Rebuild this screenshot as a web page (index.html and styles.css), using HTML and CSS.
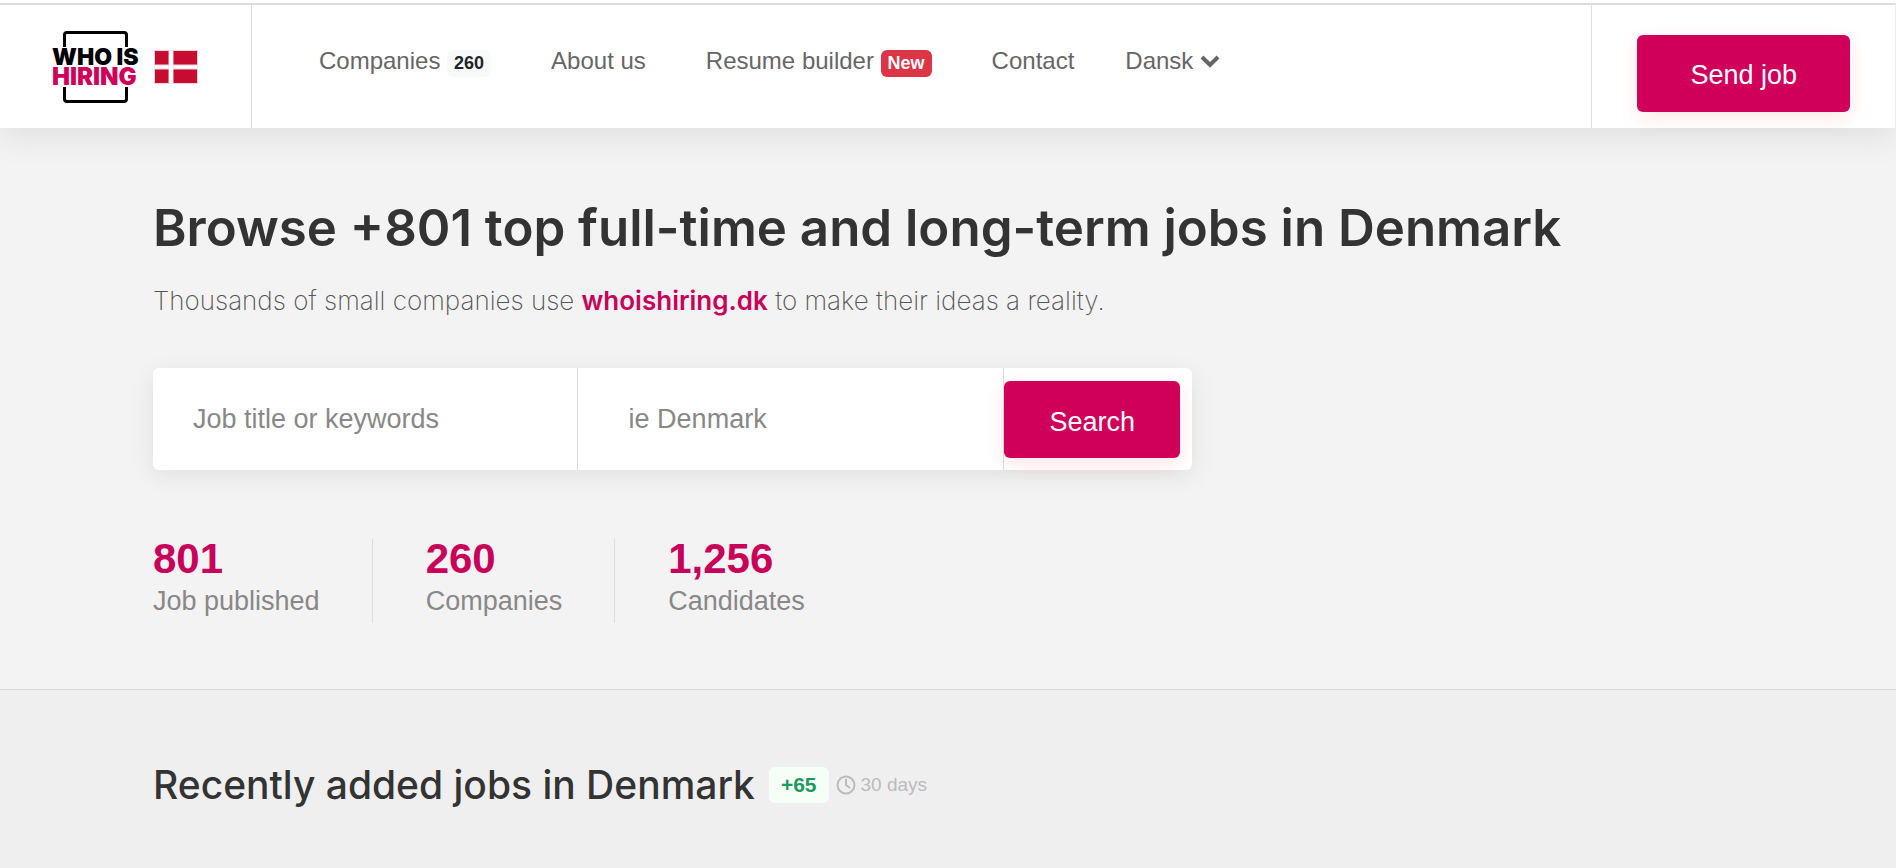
FILE: index.html
```
<!DOCTYPE html>
<html lang="en">
<head>
    <meta charset="UTF-8">
    <meta name="viewport" content="width=device-width, initial-scale=1.0">
    <title>Who is hiring</title>
    <link rel="stylesheet" href="styles.css">
</head>
<body>
    <header class="header">
        <a class="logo" href="#" aria-label="Who is hiring">
            <svg width="90" height="76" viewBox="0 0 90 76">
                <path d="M12.500 18V6q0-2.500 2.500-2.500h57q2.500 0 2.500 2.500V18M12.500 58v12q0 2.500 2.500 2.500h57q2.500 0 2.500-2.500V58" fill="none" stroke="#000" stroke-width="3"/>
                <text class="logo-text" x="0" y="36">WHO IS</text>
                <text class="logo-text logo-pink" x="0" y="56">HIRING</text>
            </svg>
            <svg width="44" height="34" viewBox="0 0 44 34">
                <path d="M0 0h44v34H0z" fill="#f6d3da"/>
                <path d="M1 1h42v32H1z" fill="#c60c30"/>
                <path d="M15 0h4v34h-4zM0 15h44v4H0z" fill="#fff" stroke="#f6d3da" stroke-width="1"/>
                <path d="M15 1h4v32h-4z" fill="#fff"/>
            </svg>
        </a>
        <nav class="nav">
            <a href="#">Companies <span class="badge badge-light">260</span></a>
            <a href="#">About us</a>
            <a href="#">Resume builder <span class="badge badge-red">New</span></a>
            <a class="nav-contact" href="#">Contact</a>
            <a href="#">Dansk
                <svg class="chevron" width="20" height="14" viewBox="0 0 20 14">
                    <path d="M2 2l8 8 8-8" fill="none" stroke="#666" stroke-width="4"/>
                </svg>
            </a>
        </nav>
        <div class="header-right">
            <button class="btn" type="button">Send job</button>
        </div>
    </header>

    <section class="hero">
        <h1>Browse +801 top full-time and long-term jobs in Denmark</h1>
        <p class="lead">Thousands of small companies use <a href="#">whoishiring.dk</a> to make their ideas a reality.</p>
        <form class="search">
            <input type="text" placeholder="Job title or keywords" aria-label="Job title or keywords">
            <input class="place" type="text" placeholder="ie Denmark" aria-label="Location">
            <button class="btn" type="button">Search</button>
        </form>
        <ul class="stats">
            <li><strong>801</strong><span>Job published</span></li>
            <li><strong>260</strong><span>Companies</span></li>
            <li><strong>1,256</strong><span>Candidates</span></li>
        </ul>
    </section>

    <section class="recent">
        <h2>Recently added jobs in Denmark</h2>
        <span class="plus">+65</span>
        <span class="days">
            <svg width="20" height="20" viewBox="0 0 20 20" fill="none" stroke="#bbb" stroke-width="2">
                <circle cx="10" cy="10" r="8.500"/>
                <path d="M10 4v6l4 3"/>
            </svg>
            30 days
        </span>
    </section>
</body>
</html>
```
FILE: styles.css
```
*{
    margin: 0;
    padding: 0;
    box-sizing: border-box;
}
body{
    min-height: 100vh;
    display: flex;
    flex-direction: column;
    background-color: #efefef;
    border-top: 3px solid #fff;
    font-family: "Liberation Sans", Arial, sans-serif;
    font-size: 27px;
}
a{
    text-decoration: none;
}

/* header */
.header{
    display: flex;
    height: 125px;
    background-color: #fff;
    border-top: 2px solid #ddd;
    border-right: 1px solid #eee;
    box-shadow: 0 10px 30px rgba(0,0,0,.08);
    z-index: 1;
}
.logo{
    display: flex;
    align-items: center;
    gap: 12px;
    padding: 0 53px 0 52px;
    border-right: 1px solid #ddd;
}
.logo-text{
    font-family: Inter, sans-serif;
    font-size: 23px;
    font-weight: 900;
}
.logo-pink{
    fill: #d0005a;
    font-size: 24px;
}
.nav{
    flex: 1;
    display: flex;
    gap: 60px;
    padding: 42px 0 0 67px;
}
.nav a{
    color: #666;
    font-size: 24px;
    line-height: 28px;
    white-space: nowrap;
}
.nav .nav-contact{
    margin-right: -9px;
}
.badge{
    display: inline-block;
    padding: 0 7px;
    border-radius: 6px;
    font-size: 18px;
    font-weight: bold;
    line-height: 27px;
}
.badge-light{
    background-color: #f8f9fa;
    color: #212529;
}
.badge-red{
    background-color: #dc3545;
    color: #fff;
}
.header-right{
    padding: 30px 45px 0;
    border-left: 1px solid #ddd;
}
.btn{
    height: 77px;
    padding: 3px 53px 0;
    border: none;
    border-radius: 6px;
    background-color: #d0005a;
    box-shadow: 0 6px 20px rgba(255,0,0,.1);
    color: #fff;
    font-family: inherit;
    font-size: 27px;
}

/* hero */
.hero{
    padding: 66px 153px;
    background-color: #f3f3f3;
    border-bottom: 1px solid #d9d9d9;
}
h1{
    color: #333;
    font-family: Inter, sans-serif;
    font-size: 51px;
    font-weight: 600;
    line-height: 68px;
}
.lead{
    margin-top: 19px;
    color: #555;
    font-family: Inter, sans-serif;
    font-size: 26px;
    font-weight: 200;
    line-height: 40px;
}
.lead a{
    color: #c9005a;
    font-weight: 600;
}
.search{
    display: flex;
    align-items: center;
    width: 100%;
    max-width: 1039px;
    height: 102px;
    margin-top: 47px;
    padding-right: 12px;
    border-radius: 6px;
    background-color: #fff;
    box-shadow: 0 6px 26px rgba(0,0,0,.08);
}
.search input{
    flex: 1 1 50%;
    min-width: 0;
    height: 100%;
    padding: 0 40px;
    border: none;
    border-right: 1px solid #ddd;
    border-radius: 6px 0 0 6px;
    outline: none;
    background-color: #fff;
    font-family: inherit;
    font-size: 27px;
}
.search .place{
    padding-left: 51px;
    border-radius: 0;
}
.search input::placeholder{
    color: #888;
}
.search .btn{
    padding: 6px 45px 0;
}
.stats{
    display: flex;
    margin-top: 69px;
    list-style: none;
}
.stats li{
    display: flex;
    flex-direction: column;
    padding-right: 52px;
    margin-right: 53px;
    border-right: 1px solid #ddd;
    height: 84px;
}
.stats li:last-child{
    border: none;
}
.stats strong{
    color: #c9005a;
    font-size: 42px;
    line-height: 40px;
}
.stats span{
    color: #888;
    line-height: 44px;
}

/* recently added */
.recent{
    display: flex;
    align-items: center;
    padding: 70px 153px;
}
h2{
    color: #333;
    font-family: Inter, sans-serif;
    font-size: 39px;
    font-weight: 500;
    line-height: 50px;
}
.plus{
    margin-left: 14px;
    padding: 0 12px;
    border-radius: 6px;
    background-color: #f5fff8;
    color: #1f9860;
    font-size: 21px;
    font-weight: bold;
    line-height: 36px;
}
.days{
    display: flex;
    align-items: center;
    gap: 5px;
    margin-left: 7px;
    color: #bbb;
    font-size: 19px;
}
```
